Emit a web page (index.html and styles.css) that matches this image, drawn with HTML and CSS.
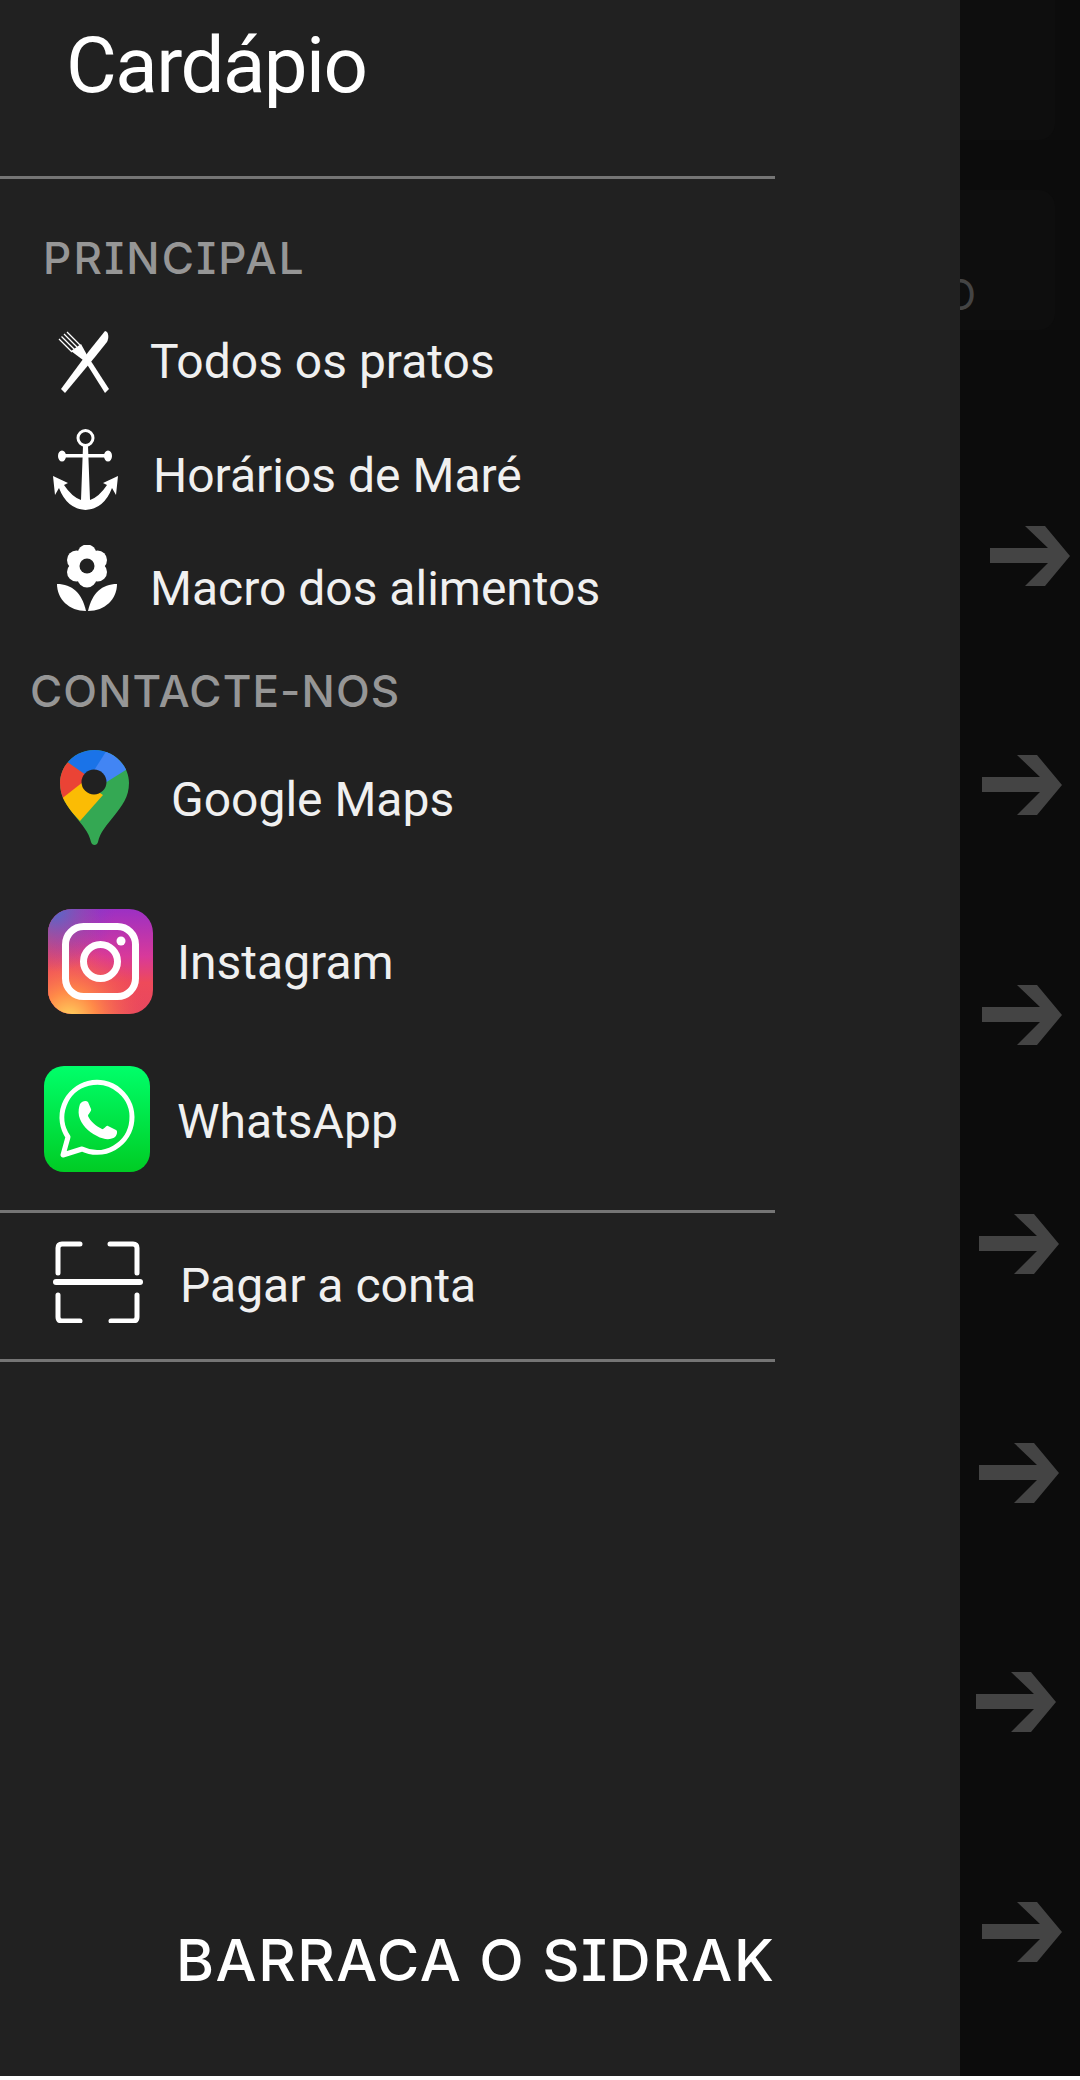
FILE: index.html
```html
<!DOCTYPE html>
<html lang="pt">
<head>
    <meta charset="UTF-8">
    <meta name="viewport" content="width=device-width, initial-scale=1.0">
    <title>Cardápio</title>
    <link rel="stylesheet" href="styles.css">
</head>
<body>
    <div class="screen">
        <nav class="drawer">
            <div class="drawer-header">
                <h1 class="drawer-title">Cardápio</h1>
            </div>
            <div class="divider"></div>

            <div class="section-label label-main">PRINCIPAL</div>

            <a class="row row-todos">
                <svg class="icon" width="53" height="62" viewBox="0 0 53 62">
                    <path fill="#fff" d="M47 0c4 1 4 7 2 11L37 26 7 62 3 58 31 20z"/>
                    <path fill="#fff" d="M13 20L23 13 29 24 25 29z"/>
                    <path fill="#fff" d="M25 27l4-3 22 34-4 4z"/>
                    <path fill="none" stroke="#fff" stroke-width="1.300" d="M1 8l13 13M3.500 5.500l13 13M6 3l13 13M9 1l13 13"/>
                </svg>
                <span class="row-text">Todos os pratos</span>
            </a>
            <a class="row row-mare">
                <svg class="icon icon-anchor" width="67" height="81" viewBox="0 0 67 81">
                    <circle cx="33.500" cy="9" r="7.500" fill="none" stroke="#fff" stroke-width="3"/>
                    <rect x="10" y="25" width="46" height="3.500" fill="#fff"/>
                    <ellipse cx="10" cy="27" rx="4" ry="5.500" fill="#fff"/>
                    <ellipse cx="56" cy="27" rx="4" ry="5.500" fill="#fff"/>
                    <path fill="#fff" d="M1 47l15 7-4 2q8 12 17 15l2-54h5l2 54q9-3 17-15l-4-2 15-7-2 19-4-7q-8 21-26.500 22Q15 80 7 59l-4 7z"/>
                </svg>
                <span class="row-text">Horários de Maré</span>
            </a>
            <a class="row row-macro">
                <svg class="icon icon-flower" width="60" height="66" viewBox="0 0 60 66">
                    <g fill="#fff">
                        <circle cx="30" cy="9" r="9.500"/>
                        <circle cx="30" cy="33" r="9.500"/>
                        <circle cx="19.500" cy="15" r="9.500"/>
                        <circle cx="40.500" cy="15" r="9.500"/>
                        <circle cx="19.500" cy="27" r="9.500"/>
                        <circle cx="40.500" cy="27" r="9.500"/>
                        <path d="M0 39c15 0 25 9 29 27C12 66 0 54 0 39z"/>
                        <path d="M60 39c-15 0-25 9-29 27C48 66 60 54 60 39z"/>
                    </g>
                    <circle cx="30" cy="21" r="7.500" fill="#212121"/>
                </svg>
                <span class="row-text">Macro dos alimentos</span>
            </a>

            <div class="section-label label-contact">CONTACTE-NOS</div>

            <a class="row row-maps">
                <svg class="icon icon-pin" width="69" height="95" viewBox="0 0 69 95">
                    <defs>
                        <clipPath id="pin">
                            <path d="M34.500 0C53.500 0 69 15 69 33c0 14-7 23-15 33-7 9-14 16-16 26-1 4-6 4-7 0-2-10-9-17-16-26C7 56 0 47 0 33 0 15 15.500 0 34.500 0z"/>
                        </clipPath>
                    </defs>
                    <g clip-path="url(#pin)">
                        <rect width="69" height="95" fill="#34a853"/>
                        <path fill="#1a73e8" d="M0 0h50L34 32 5 10z"/>
                        <path fill="#4285f4" d="M47 0h22v18L45 33 33 22z"/>
                        <path fill="#ea4335" d="M0 7l26 18-3 10L0 52z"/>
                        <path fill="#fbbc04" d="M23 32l20 13-23 26L0 50z"/>
                    </g>
                    <circle cx="34" cy="32" r="12.500" fill="#212121"/>
                </svg>
                <span class="row-text">Google Maps</span>
            </a>
            <a class="row row-insta">
                <svg class="icon icon-insta" width="105" height="105" viewBox="0 0 105 105">
                    <defs>
                        <linearGradient id="ig-base" x1="0" y1="0" x2="0" y2="1">
                            <stop offset="0" stop-color="#9c30c4"/>
                            <stop offset="0.450" stop-color="#d8399a"/>
                            <stop offset="0.700" stop-color="#ee4a5a"/>
                            <stop offset="1" stop-color="#e8475f"/>
                        </linearGradient>
                        <radialGradient id="ig-yellow" cx="0.200" cy="1.050" r="0.750">
                            <stop offset="0" stop-color="#ffd75e"/>
                            <stop offset="0.350" stop-color="#ff8a48"/>
                            <stop offset="1" stop-color="#f04a58" stop-opacity="0"/>
                        </radialGradient>
                        <radialGradient id="ig-blue" cx="0.050" cy="0" r="0.600">
                            <stop offset="0" stop-color="#4a6ed0"/>
                            <stop offset="1" stop-color="#8a35c8" stop-opacity="0"/>
                        </radialGradient>
                        <linearGradient id="ig-side" x1="0" y1="0" x2="1" y2="0">
                            <stop offset="0" stop-color="#ee4a5a" stop-opacity="0.900"/>
                            <stop offset="0.500" stop-color="#ee4a5a" stop-opacity="0"/>
                        </linearGradient>
                    </defs>
                    <rect width="105" height="105" rx="24" fill="url(#ig-base)"/>
                    <rect width="105" height="105" rx="24" fill="url(#ig-side)"/>
                    <rect width="105" height="105" rx="24" fill="url(#ig-yellow)"/>
                    <rect width="105" height="105" rx="24" fill="url(#ig-blue)"/>
                    <rect x="17.500" y="17.500" width="70" height="70" rx="18" fill="none" stroke="#fff" stroke-width="7"/>
                    <circle cx="52.500" cy="52.500" r="17" fill="none" stroke="#fff" stroke-width="7"/>
                    <circle cx="73" cy="32" r="4.500" fill="#fff"/>
                </svg>
                <span class="row-text">Instagram</span>
            </a>
            <a class="row row-whats">
                <svg class="icon icon-whats" width="106" height="106" viewBox="0 0 106 106">
                    <defs>
                        <linearGradient id="wa-bg" x1="0" y1="0" x2="0" y2="1">
                            <stop offset="0" stop-color="#00ff6a"/>
                            <stop offset="1" stop-color="#00cc24"/>
                        </linearGradient>
                    </defs>
                    <rect width="106" height="106" rx="20" fill="url(#wa-bg)"/>
                    <path fill="none" stroke="#fff" stroke-width="5" stroke-linejoin="round" d="M19 89l5-18A35 35 0 1 1 38 83z"/>
                    <path fill="#fff" d="M36 38c2-3 6-4 8-2l3 7c1 2-3 5-3 7 2 5 8 10 14 13 2 1 4-4 6-3l8 4c2 1 1 5-1 7-4 3-11 3-18-1-9-4-16-12-18-20-1-5 0-9 1-12z"/>
                </svg>
                <span class="row-text">WhatsApp</span>
            </a>
            <div class="divider divider-mid"></div>
            <a class="row row-pay">
                <svg class="icon icon-pay" width="90" height="82" viewBox="0 0 90 82">
                    <g fill="none" stroke="#fff" stroke-width="5" stroke-linecap="round" stroke-linejoin="round">
                        <path d="M27 3H9Q5 3 5 7v25"/>
                        <path d="M57 3h23q4 0 4 4v25"/>
                        <path d="M5 54v22q0 4 4 4h18"/>
                        <path d="M84 54v22q0 4-4 4H58"/>
                    </g>
                    <path stroke="#fff" stroke-width="6" stroke-linecap="round" d="M3 41h84"/>
                </svg>
                <span class="row-text">Pagar a conta</span>
            </a>
            <div class="divider"></div>

            <div class="brand">BARRACA O SIDRAK</div>
        </nav>

        <main class="backdrop">
            <div class="ghost-card ghost-top"></div>
            <div class="ghost-card ghost-second"><span class="ghost-text">O</span></div>
            <div class="arrow-list">
                <svg class="arrow arrow-a" width="80" height="60" viewBox="0 0 80 60"><path d="M0 22h58L35 0h20l25 30-25 30H35l23-23H0z"/></svg>
                <svg class="arrow arrow-b" width="80" height="60" viewBox="0 0 80 60"><path d="M0 22h58L35 0h20l25 30-25 30H35l23-23H0z"/></svg>
                <svg class="arrow arrow-b" width="80" height="60" viewBox="0 0 80 60"><path d="M0 22h58L35 0h20l25 30-25 30H35l23-23H0z"/></svg>
                <svg class="arrow arrow-c" width="80" height="60" viewBox="0 0 80 60"><path d="M0 22h58L35 0h20l25 30-25 30H35l23-23H0z"/></svg>
                <svg class="arrow arrow-c" width="80" height="60" viewBox="0 0 80 60"><path d="M0 22h58L35 0h20l25 30-25 30H35l23-23H0z"/></svg>
                <svg class="arrow arrow-d" width="80" height="60" viewBox="0 0 80 60"><path d="M0 22h58L35 0h20l25 30-25 30H35l23-23H0z"/></svg>
                <svg class="arrow arrow-b" width="80" height="60" viewBox="0 0 80 60"><path d="M0 22h58L35 0h20l25 30-25 30H35l23-23H0z"/></svg>
            </div>
        </main>
    </div>
</body>
</html>
```

FILE: styles.css
```css
* {
    box-sizing: border-box;
}

html, body {
    margin: 0;
    padding: 0;
    background: #fff;
}

body {
    width: 1080px;
    height: 2080px;
    overflow: hidden;
    font-family: Roboto, "Liberation Sans", sans-serif;
    color: #f0f0f0;
}

.screen {
    display: flex;
    height: 2076px;
    background: #0c0c0c;
}

/* drawer */
.drawer {
    width: 960px;
    flex: none;
    display: flex;
    flex-direction: column;
    background: #212121;
}

.drawer-header {
    height: 176px;
    padding: 26px 0 0 66px;
}

.drawer-title {
    margin: 0;
    font-size: 78px;
    font-weight: 400;
    line-height: 80px;
    letter-spacing: -1.5px;
    color: #fff;
}

.divider {
    width: 775px;
    height: 3px;
    flex: none;
    background: #757575;
}

.divider-mid {
    margin-top: 21px;
}

.section-label {
    height: 54px;
    font-family: Inter, Roboto, sans-serif;
    font-size: 44px;
    font-weight: 500;
    line-height: 54px;
    color: #969696;
    font-feature-settings: "ss02", "cv08";
}

.label-main {
    margin-top: 52px;
    padding-left: 43px;
    letter-spacing: 2.2px;
}

.label-contact {
    margin-top: 19px;
    padding-left: 30px;
    letter-spacing: 1.1px;
}

.row {
    display: flex;
    align-items: center;
    flex: none;
}

.row-text {
    font-size: 48px;
    line-height: 56px;
}

.icon {
    flex: none;
}

.icon-anchor {
    margin-bottom: 13px;
}

.icon-flower {
    margin-bottom: 22px;
}

.icon-pin {
    margin-bottom: 6px;
}

.icon-insta {
    margin-bottom: 4px;
}

.icon-whats {
    margin-bottom: 7px;
}

.icon-pay {
    margin-bottom: 8px;
}

.row-todos {
    height: 114px;
    margin-top: 20px;
    padding-left: 58px;
    gap: 39px;
}

.row-mare {
    height: 114px;
    padding-left: 52px;
    gap: 34px;
}

.row-macro {
    height: 112px;
    padding-left: 57px;
    gap: 33px;
}

.row-maps {
    height: 116px;
    margin-top: 24px;
    padding-left: 60px;
    gap: 42px;
}

.row-insta {
    height: 134px;
    margin-top: 38px;
    padding-left: 48px;
    gap: 24px;
}

.row-whats {
    height: 134px;
    margin-top: 25px;
    padding-left: 44px;
    gap: 27px;
}

.row-pay {
    height: 146px;
    padding-left: 53px;
    gap: 37px;
}

.brand {
    margin-top: auto;
    padding: 0 0 76px 176px;
    font-family: Inter, Roboto, sans-serif;
    font-size: 58px;
    font-weight: 500;
    line-height: 80px;
    letter-spacing: 1.5px;
    color: #fff;
    font-feature-settings: "ss02", "cv08";
}

/* dimmed page behind the drawer */
.backdrop {
    flex: 1;
    min-width: 0;
    position: relative;
    overflow: hidden;
}

.ghost-card {
    position: absolute;
    background: #0e0e0e;
    border-radius: 16px;
}

.ghost-top {
    top: -20px;
    left: -20px;
    width: 115px;
    height: 160px;
}

.ghost-second {
    top: 190px;
    left: -20px;
    width: 115px;
    height: 140px;
}

.ghost-text {
    position: absolute;
    left: 4px;
    top: 83px;
    font-family: Inter, Roboto, sans-serif;
    font-size: 42px;
    line-height: 44px;
    color: #444;
}

.arrow-list {
    position: absolute;
    top: 526px;
    left: 0;
    display: flex;
    flex-direction: column;
    gap: 169.3px;
}

.arrow {
    display: block;
    fill: #444;
}

.arrow-a {
    margin-left: 30px;
}

.arrow-b {
    margin-left: 22px;
}

.arrow-c {
    margin-left: 19px;
}

.arrow-d {
    margin-left: 16px;
}
```
